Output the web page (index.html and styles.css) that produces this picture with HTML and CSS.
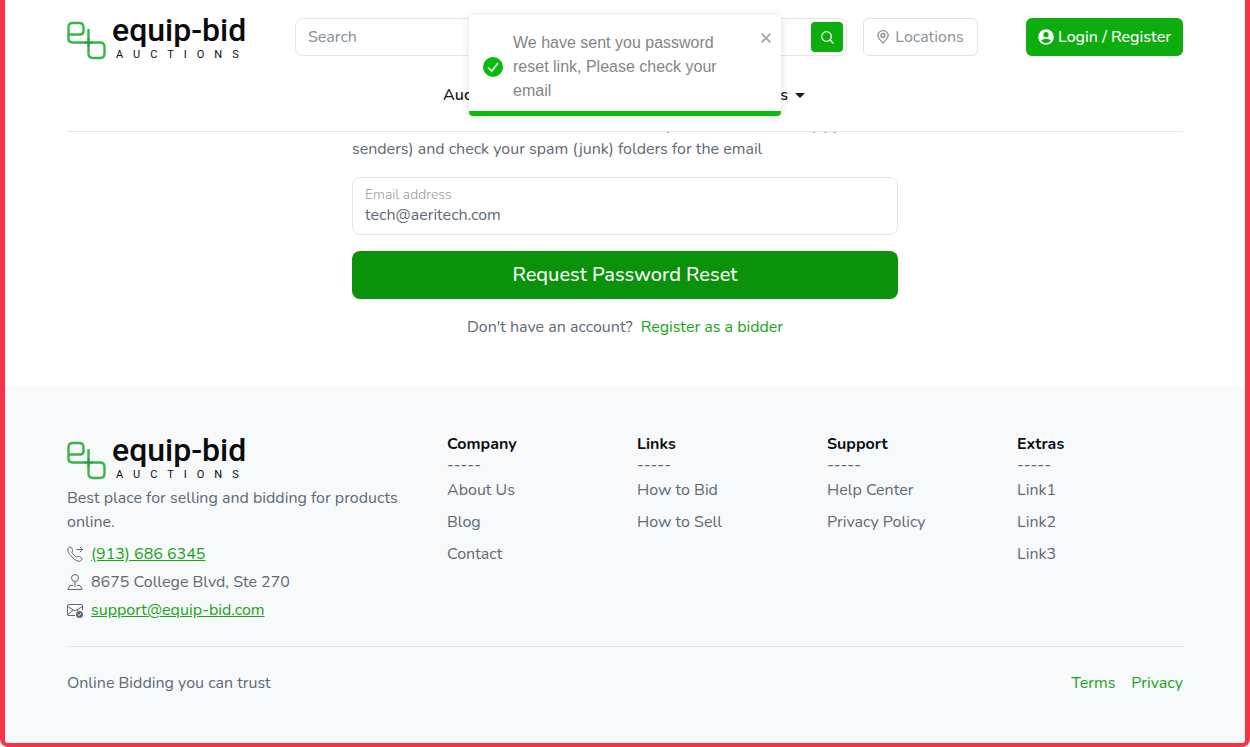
FILE: index.html
```html
<!DOCTYPE html>
<html lang="en">
<head>
<meta charset="utf-8">
<meta name="viewport" content="width=device-width, initial-scale=1">
<title>Equip-Bid Auctions</title>
<link rel="stylesheet" href="styles.css">
</head>
<body>
<svg class="sprite" aria-hidden="true">
  <symbol id="mark" viewBox="0 0 40 46">
    <path d="M1.500 13.500H13Q16.500 13.500 16.500 10V6Q16.500 2 12.500 2H5.500Q1.500 2 1.500 6V17.500Q1.500 21.500 5.500 21.500H33Q37.500 21.500 37.500 26V32.500Q37.500 37 33 37H26Q21.500 37 21.500 32.500V8" fill="none" stroke="#38b549" stroke-width="2.400"/>
    <path d="M21.500 17V26M17 21.500H26" stroke="#267a43" stroke-width="2.200" opacity=".45"/>
  </symbol>
</svg>
<div class="frame">
  <header class="header">
    <div class="topbar">
      <a class="logo" href="#">
        <svg class="logo-mark" aria-hidden="true"><use href="#mark"/></svg>
        <span class="logo-words"><span class="logo-name">equip-bid</span><span class="logo-sub">AUCTIONS</span></span>
      </a>
      <form class="search">
        <input class="search-input" type="search" placeholder="Search" aria-label="Search">
        <button class="search-btn" type="button" aria-label="Submit search">
          <svg width="13" height="13" viewBox="0 0 13 13" fill="none" stroke="currentColor" stroke-width="1.200"><circle cx="5.500" cy="5.500" r="4.800"/><path d="M9 9l3.500 3.500"/></svg>
        </button>
      </form>
      <button class="locations" type="button">
        <svg width="12" height="14" viewBox="0 0 12 14" fill="none" stroke="currentColor" stroke-width="1.300"><path d="M6 13C3.500 10.300.800 8 .800 5.500a5.200 4.800 0 0 1 10.400 0C11.200 8 8.500 10.300 6 13z"/><circle cx="6" cy="5.500" r="2"/></svg>
        Locations
      </button>
      <a class="login" href="#">
        <svg width="16" height="16" viewBox="0 0 16 16"><circle cx="8" cy="8" r="7.800" fill="#fff"/><circle cx="8" cy="5.700" r="2.600" fill="#0dad0d"/><path d="M3.200 11.800Q4.800 9.700 8 9.700T12.800 11.800Q11 14 8 14T3.200 11.800z" fill="#0dad0d"/></svg>
        Login / Register
      </a>
    </div>
    <nav class="nav"><a href="#">Auctions</a><a class="has-menu" href="#">Services</a></nav>
  </header>

  <div class="toast" role="status">
    <svg class="toast-icon" width="20" height="20" viewBox="0 0 20 20"><circle cx="10" cy="10" r="10" fill="#07bc0c"/><path d="M5 10.500l3.700 3.700L15 6" fill="none" stroke="#fff" stroke-width="1.700"/></svg>
    <p class="toast-text">We have sent you password reset link, Please check your email</p>
    <button class="toast-close" type="button" aria-label="Close"><svg width="10" height="10" viewBox="0 0 10 10"><path d="M.700.700l8.600 8.600M9.300.700L.700 9.300" stroke="#a6a6a6" stroke-width="1.900"/></svg></button>
  </div>

  <main class="main">
    <p class="hint">Please do add the auction house domain to your email whitelist (approved senders) and check your spam (junk) folders for the email</p>
    <form>
      <div class="field">
        <label for="email">Email address</label>
        <input id="email" type="email" value="tech@aeritech.com">
      </div>
      <button class="submit" type="button">Request Password Reset</button>
    </form>
    <p class="register"><span>Don't have an account?</span><a href="#">Register as a bidder</a></p>
  </main>

  <footer class="footer">
    <div class="columns">
      <section class="column">
        <a class="logo" href="#">
          <svg class="logo-mark" aria-hidden="true"><use href="#mark"/></svg>
          <span class="logo-words"><span class="logo-name">equip-bid</span><span class="logo-sub">AUCTIONS</span></span>
        </a>
        <p class="about">Best place for selling and bidding for products online.</p>
        <ul class="contacts">
          <li><svg width="16" height="16" viewBox="0 0 16 16" fill="none" stroke="currentColor"><path d="M3.700 1.100Q2.900.500 2.200 1.200L1 2.500C-.100 4.200 1.500 7.500 5 11S12 16.200 13.600 14.800L14.900 13.600Q15.500 12.900 14.800 12.200L12.700 10.600Q12.200 10.200 11.600 10.400L9.500 10.900Q9 11 8.600 10.600L5.400 7.400Q5 7 5.100 6.500L5.600 4.400Q5.800 3.800 5.400 3.300zM9.500 3.500H15.500M13 1l2.500 2.500L13 6"/></svg><a href="#">(913) 686 6345</a></li>
          <li><svg width="16" height="16" viewBox="0 0 16 16" fill="none" stroke="currentColor"><circle cx="8" cy="4" r="3.500"/><path d="M8 7.500V13M6 11.500H3L.800 15.500H15.200L13 11.500H10"/></svg><span>8675 College Blvd, Ste 270</span></li>
          <li><svg width="16" height="16" viewBox="0 0 16 16" fill="none" stroke="currentColor"><path d="M8 13.500H2Q.500 13.500.500 12V4Q.500 2.500 2 2.500H14Q15.500 2.500 15.500 4V8M.500 4.500L8 9L15.500 4.500M.800 12.800L6 8M10 8l1.500 1"/><circle cx="12.500" cy="12.500" r="3.500" fill="currentColor" stroke="none"/><path d="M11 12.500l1.200 1.200 1.800-2.500" stroke="#f7f9fb"/></svg><a href="#">support@equip-bid.com</a></li>
        </ul>
      </section>
      <section class="column"><h2>Company</h2><p class="dashes">-----</p><ul class="links"><li><a href="#">About Us</a></li><li><a href="#">Blog</a></li><li><a href="#">Contact</a></li></ul></section>
      <section class="column"><h2>Links</h2><p class="dashes">-----</p><ul class="links"><li><a href="#">How to Bid</a></li><li><a href="#">How to Sell</a></li></ul></section>
      <section class="column"><h2>Support</h2><p class="dashes">-----</p><ul class="links"><li><a href="#">Help Center</a></li><li><a href="#">Privacy Policy</a></li></ul></section>
      <section class="column"><h2>Extras</h2><p class="dashes">-----</p><ul class="links"><li><a href="#">Link1</a></li><li><a href="#">Link2</a></li><li><a href="#">Link3</a></li></ul></section>
    </div>
    <div class="bottom"><span>Online Bidding you can trust</span><nav class="legal"><a href="#">Terms</a><a href="#">Privacy</a></nav></div>
  </footer>
</div>
</body>
</html>
```
FILE: styles.css
```css
* { box-sizing: border-box; }
body { margin: 0; background: #fff; color: #5e6974; font: 16px/24px Nunito, Lato, "Open Sans", sans-serif; }
p, ul, h2 { margin: 0; padding: 0; }
ul { list-style: none; }
a { color: #16a516; text-decoration: none; }
button, input { font: inherit; }
svg { flex: none; }
.sprite { position: absolute; width: 0; height: 0; }
.frame { display: flex; flex-direction: column; min-height: 100vh; border: 5px solid #fa3245; border-top: 0; border-bottom-width: 4px; border-radius: 0 0 8px 8px; overflow: hidden; }

.header { position: relative; z-index: 1; margin: 0 62px; padding-top: 15px; height: 132px; background: #fff; border-bottom: 1px solid #e4e6e8; }
.topbar { display: flex; align-items: center; height: 44px; }
.logo { display: flex; gap: 5px; width: 181px; height: 44px; color: #0b0b0b; }
.logo-mark { width: 40px; height: 46px; margin-top: 6px; }
.logo-words { display: flex; flex-direction: column; gap: 2px; font-family: Roboto, sans-serif; white-space: nowrap; }
.logo-name { font-size: 32px; line-height: 30px; font-weight: 500; }
.logo-sub { padding-left: 4px; font-size: 11px; line-height: 16px; letter-spacing: 10px; }
.search { display: flex; flex: 1; height: 38px; margin-left: 47px; padding: 3px; border: 1px solid #e4e6e8; border-radius: 8px; }
.search-input { flex: 1; min-width: 0; padding: 0 9px; border: 0; outline: 0; background: none; color: #5e6974; }
.search-input::placeholder { color: #858e96; opacity: 1; }
.search-btn { display: grid; place-items: center; width: 32px; padding: 0; border: 0; border-radius: 4px; background: #0dad0d; color: #fff; }
.locations { display: flex; align-items: center; justify-content: center; gap: 6px; width: 115px; height: 38px; margin-left: 16px; padding: 0; border: 1px solid #dfe2e4; border-radius: 6px; background: #fff; color: #899298; }
.login { display: flex; align-items: center; justify-content: center; gap: 4px; width: 157px; height: 38px; margin-left: 48px; border-radius: 6px; background: #0dad0d; color: #fff; font-weight: 500; white-space: nowrap; }
.nav { display: flex; justify-content: space-between; max-width: 364px; margin: 24px auto 0; padding-right: 2px; }
.nav a { color: #16191c; font-weight: 600; }
.has-menu::after { content: ""; display: inline-block; margin-left: 7px; vertical-align: 2px; border: 5px solid transparent; border-top-color: #16191c; border-bottom: 0; }

.toast { position: absolute; z-index: 2; top: 15px; left: 50%; width: 312px; margin-left: -156px; padding: 16px 10px 8px 14px; display: flex; align-items: center; border-bottom: 5px solid #07bc0c; border-radius: 4px; background: #fff; box-shadow: 0 1px 10px rgba(0,0,0,.12); color: #858585; font-family: "Liberation Sans", sans-serif; }
.toast-text { flex: 1; margin: 0 24px 0 10px; }
.toast-close { align-self: flex-start; display: grid; padding: 2px 0; border: 0; background: none; }

.main { width: 546px; max-width: 100%; margin: -20px auto 0; padding-bottom: 48px; }
.hint { padding-top: 1px; }
.field { display: flex; flex-direction: column; height: 58px; margin-top: 16px; padding: 8px 12px; border: 1px solid #e4e6e8; border-radius: 8px; }
.field label { color: #959ca3; font-size: 14px; line-height: 17px; font-weight: 300; }
.field input { padding: 0; height: 24px; border: 0; outline: 0; background: none; color: #5e6974; }
.submit { display: block; width: 100%; height: 48px; margin-top: 16px; border: 0; border-radius: 8px; background: #0a930a; color: #fff; font-size: 20px; font-weight: 500; }
.register { display: flex; justify-content: center; gap: 8px; margin-top: 16px; }

.footer { flex: 1; padding: 48px 62px; background: #f7f9fb; }
.columns { display: grid; grid-template-columns: 2fr 1fr 1fr 1fr 1fr; margin: 0 -12px; padding-bottom: 22px; }
.column { padding: 0 12px; }
.column h2 { margin-top: -3px; color: #0b0f12; font-size: 16px; line-height: 24px; font-weight: 700; }
.dashes { line-height: 18px; }
.about { margin-top: 7px; }
.contacts { padding-top: 6px; }
.contacts li { display: flex; align-items: center; gap: 8px; height: 28px; }
.contacts a { text-decoration: underline; }
.links li { padding: 4px 0; }
.links a { color: #5e6974; }
.bottom { display: flex; justify-content: space-between; padding-top: 24px; border-top: 1px solid #e2e5e8; }
.legal { display: flex; gap: 16px; }
```
